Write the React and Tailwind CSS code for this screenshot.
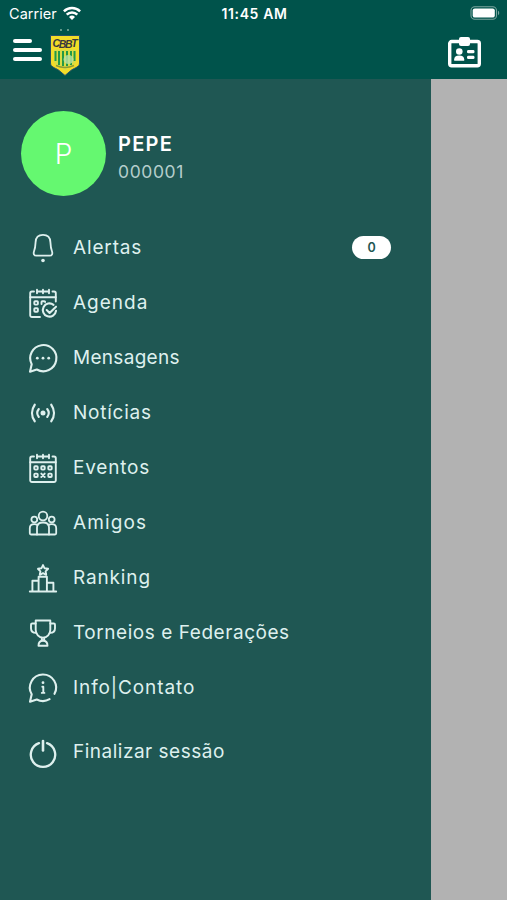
import React from "react";

const menu = [
  { id: "alertas", label: "Alertas", icon: BellIcon, badge: 0, tracking: "tracking-[0.85px]" },
  { id: "agenda", label: "Agenda", icon: AgendaIcon, tracking: "tracking-[1px]" },
  { id: "mensagens", label: "Mensagens", icon: MessageIcon, tracking: "tracking-[0.3px]" },
  { id: "noticias", label: "Notícias", icon: NewsIcon, tracking: "tracking-[0.75px]" },
  { id: "eventos", label: "Eventos", icon: EventsIcon, tracking: "tracking-[0.8px]" },
  { id: "amigos", label: "Amigos", icon: FriendsIcon, tracking: "tracking-[1.1px]" },
  { id: "ranking", label: "Ranking", icon: RankingIcon, tracking: "tracking-[0.85px]" },
  { id: "torneios", label: "Torneios e Federações", icon: TrophyIcon, tracking: "tracking-[0.55px]" },
  { id: "info", label: "Info|Contato", icon: InfoIcon, tracking: "tracking-[0.9px]" },
];

function Icon({ children, width = 1.8 }) {
  return (
    <svg className="w-[30px] h-[31px] shrink-0 overflow-visible" viewBox="0 0 30 31" fill="none" stroke="currentColor" strokeWidth={width} strokeLinecap="round" strokeLinejoin="round">
      {children}
    </svg>
  );
}

function BellIcon() {
  return (
    <Icon>
      <path d="M15 2.9c-4.6 0-7.2 3-7.4 7.2-.2 4-.5 6.4-1.5 8.900-.9 2.500-.4 4.700 2.400 4.700h13c2.800 0 3.300-2.200 2.400-4.700-1-2.500-1.300-4.900-1.500-8.900C22.200 5.900 19.600 2.900 15 2.900z" />
      <circle cx="15" cy="28.500" r="1.800" fill="currentColor" stroke="none" />
    </Icon>
  );
}

function CalendarTop() {
  return <path d="M6 4.500H4a1.800 1.800 0 0 0-1.800 1.800v3.900h25.600V6.300A1.800 1.800 0 0 0 26 4.500h-1.500M9 2.700v3.600M15 2.700v3.600M21 2.700v3.600M9 4.500h12" />;
}

function AgendaIcon() {
  return (
    <Icon width={1.9}>
      <CalendarTop />
      <path d="M2.200 10.200v18a1.800 1.800 0 0 0 1.800 1.800h8M27.800 10.200v4.300" />
      <rect x="6.300" y="14.200" width="3.600" height="3.400" rx="0.800" />
      <rect x="6.300" y="21.300" width="3.600" height="3.400" rx="0.800" />
      <path d="M13.500 17v-2a.8.8 0 0 1 .8-.8h2a.8.8 0 0 1 .8.8" />
      <path d="M25.500 17.800a6.600 6.600 0 1 0 2.500 6M18.700 23l2.900 2.900 6.400-6.200" strokeWidth="2.100" />
    </Icon>
  );
}

function EventsIcon() {
  return (
    <Icon width={1.9}>
      <CalendarTop />
      <path d="M2.200 10.200v18A1.800 1.800 0 0 0 4 30h22a1.800 1.800 0 0 0 1.800-1.800v-18" />
      <rect x="6.300" y="14.200" width="3.400" height="3.400" rx="0.800" />
      <rect x="13.300" y="14.200" width="3.400" height="3.400" rx="0.800" />
      <rect x="20.300" y="14.200" width="3.400" height="3.400" rx="0.800" />
      <rect x="6.300" y="21.600" width="3.400" height="3.400" rx="0.800" />
      <path d="M13.300 21.600l3.400 3.400M16.700 21.600L13.300 25" />
      <rect x="20.300" y="21.600" width="3.400" height="3.400" rx="0.800" />
    </Icon>
  );
}

function MessageIcon() {
  return (
    <Icon width={2.1}>
      <path d="M2 29.700l1.700-7.500A13.100 13.100 0 1 1 8.800 27.500z" />
      <g fill="currentColor" stroke="none">
        <circle cx="9.300" cy="16.200" r="1.400" />
        <circle cx="15" cy="16.200" r="1.400" />
        <circle cx="20.700" cy="16.200" r="1.400" />
      </g>
    </Icon>
  );
}

function NewsIcon() {
  return (
    <Icon width={2.1}>
      <circle cx="15" cy="16" r="2.500" fill="currentColor" stroke="none" />
      <path d="M10.800 12c-1.900 2.400-1.900 5.600 0 8M19.200 12c1.900 2.400 1.900 5.600 0 8" />
      <path d="M6.700 7.800c-3.500 5-3.500 11.400 0 16.400M23.300 7.800c3.500 5 3.500 11.400 0 16.400" strokeWidth="2.300" />
    </Icon>
  );
}

function FriendsIcon() {
  return (
    <Icon width={1.8}>
      <circle cx="15" cy="9" r="4.300" />
      <circle cx="6.300" cy="12.500" r="2.900" />
      <circle cx="23.700" cy="12.500" r="2.900" />
      <path d="M9 27.500V20.500c0-3 2.200-5 6-5s6 2 6 5v7z" />
      <path d="M9 27.500H3a1.200 1.200 0 0 1-1.200-1.200v-5.100c0-2.700 1.800-4 4.500-4 1.300 0 2.400.3 3.200.9M21 27.500h6a1.200 1.200 0 0 0 1.200-1.200v-5.100c0-2.700-1.800-4-4.500-4-1.300 0-2.400.3-3.200.9" />
    </Icon>
  );
}

function RankingIcon() {
  return (
    <Icon width={1.9}>
      <path d="M1.800 29.500h26.400M4.400 29.500V18.700h6.200M10.600 29.500V14.700h8.300v14.800M18.900 20.700h6.500v8.800" />
      <path d="M15 3.100l1.600 3.200 3.500.5-2.500 2.500.6 3.500L15 11.100l-3.200 1.700.6-3.500-2.500-2.500 3.500-.5z" />
    </Icon>
  );
}

function TrophyIcon() {
  return (
    <Icon width={1.9}>
      <path d="M7.700 3.500h14.600v9.200c0 4.500-3.200 7.900-7.300 7.900s-7.300-3.400-7.300-7.900z" />
      <path d="M7.700 6.500H4.200C3.500 6.500 3 7 3 7.700v3.500c0 2.700 1.900 4.600 5.100 4.600M22.300 6.500h3.500c.7 0 1.200.5 1.200 1.200v3.500c0 2.700-1.900 4.600-5.100 4.600" />
      <path d="M13.800 20.700v2.600M16.200 20.700v2.600M10.500 28.800h9c0-3-1.800-5-4.500-5s-4.500 2-4.500 5z" />
    </Icon>
  );
}

function InfoIcon() {
  return (
    <Icon width={2.1}>
      <path d="M26.500 21.800A13.100 13.100 0 1 0 3.700 22.200L2 29.700l6.800-2.200a13 13 0 0 0 12.800-.3" />
      <path d="M14.300 14.700h1v6.200M13.800 20.900h2.600" strokeWidth="1.900" />
      <circle cx="15" cy="10.700" r="1.400" fill="currentColor" stroke="none" />
    </Icon>
  );
}

function PowerIcon() {
  return (
    <Icon width={2.3}>
      <path d="M11 6.200a12.200 12.200 0 1 0 8 0" />
      <path d="M15 4v9.500" strokeWidth="2.600" />
    </Icon>
  );
}

function StatusBar() {
  return (
    <div className="h-7 flex items-center justify-between pl-[9px] pr-[7px] text-[14.500px] leading-none">
      <div className="flex-1 flex items-center gap-[6px]">
        <span className="tracking-[0.05px]">Carrier</span>
        <svg className="w-[18px] h-[14px] -mt-[2px]" viewBox="0 0 18 14" fill="none" stroke="currentColor" strokeWidth="2.500">
          <path d="M.9 5.300a11.500 11.500 0 0 1 16.200 0M3.700 8.700a7.500 7.500 0 0 1 10.600 0" />
          <path d="M9 13.900L6 10.900a4.300 4.300 0 0 1 6 0z" fill="currentColor" stroke="none" />
        </svg>
      </div>
      <span className="text-[14px] font-semibold tracking-[0.6px]">11:45 AM</span>
      <div className="flex-1 flex justify-end">
        <svg className="w-[30px] h-[14px] -mt-[2px]" viewBox="0 0 30 14">
          <rect x="1" y="0.700" width="25.500" height="12.600" rx="3.800" fill="none" stroke="#7ba59f" strokeWidth="1.100" />
          <rect x="2.700" y="2.400" width="22.100" height="9.200" rx="2.200" fill="#fff" />
          <path d="M28 4.800c1.600.6 1.600 3.800 0 4.400z" fill="#7ba59f" />
        </svg>
      </div>
    </div>
  );
}

function Crest() {
  return (
    <svg className="w-[32px] h-[50px]" viewBox="0 0 32 50">
      <circle cx="12" cy="3" r="0.900" fill="#8fb9a8" />
      <circle cx="19" cy="3" r="0.900" fill="#8fb9a8" />
      <path d="M1.500 8.500h29v27.500c0 4-4 4.500-8 7L16 48.500l-6.500-5.500c-4-2.500-8-3-8-7z" fill="#f3dc28" stroke="#24506a" strokeWidth="1" />
      <path d="M5 22.500h22v12.500c-1 4-7 4.500-11 8.500-4-4-10-4.500-11-8.500z" fill="#d9dc45" />
      <path d="M6.500 24v10M10 24v14M14 24v15M18 24v15M22 24v14M25.500 24v10" stroke="#249946" strokeWidth="2" />
      <ellipse cx="19.500" cy="32.500" rx="5" ry="4.500" fill="#b6dfa0" opacity="0.850" />
      <path d="M7 38.500q9 4 18 0" stroke="#8c9a35" strokeWidth="1.600" fill="none" />
      <text x="3.500 9.700 16 22.300" y="19.500 21.300 21.300 19.500" fill="#38393f" fontFamily="Liberation Sans, sans-serif" fontWeight="700" fontStyle="italic" fontSize="10.500">CBBT</text>
    </svg>
  );
}

function BadgeIcon() {
  return (
    <svg className="w-[33px] h-[31px]" viewBox="0 0 33 31" fill="#fff">
      <rect x="1.700" y="4.500" width="29.600" height="24.300" rx="2" fill="none" stroke="#fff" strokeWidth="3.400" />
      <rect x="11" y="0" width="11" height="9" rx="2" />
      <circle cx="11.300" cy="14.500" r="3.300" />
      <path d="M6.200 23.700v-1.500c0-2.300 1.700-3.700 5-3.700s5 1.400 5 3.700v1.500z" />
      <rect x="19" y="13" width="7.500" height="3.300" rx="1.400" />
      <rect x="19" y="18.800" width="7.500" height="3.300" rx="1.400" />
    </svg>
  );
}

function MenuItem({ item }) {
  const ItemIcon = item.icon;
  return (
    <li className="h-[55px] flex items-center pl-7 pr-10">
      <ItemIcon />
      <span className={`ml-[15px] whitespace-nowrap ${item.tracking}`}>{item.label}</span>
      {item.badge !== undefined && (
        <span className="ml-auto w-[39px] h-[23px] rounded-full bg-white text-[#1f5753] text-[12.500px] font-semibold flex items-center justify-center">
          {item.badge}
        </span>
      )}
    </li>
  );
}

export default function App() {
  return (
    <div className="w-full h-screen flex flex-col overflow-hidden bg-[#b2b2b2] text-white font-['Inter',sans-serif]">
      <header className="h-[79px] shrink-0 bg-[#00534b]">
        <StatusBar />
        <div className="flex items-start justify-between pl-[13px] pr-[26px]">
          <div className="flex items-start">
            <button className="mt-[11px] flex flex-col gap-[5px]" aria-label="Menu">
              <span className="block w-[19px] h-[4px] rounded-full bg-white" />
              <span className="block w-[29px] h-[4px] rounded-full bg-white" />
              <span className="block w-[29px] h-[4px] rounded-full bg-white" />
            </button>
            <div className="ml-[7px] -mt-px">
              <Crest />
            </div>
          </div>
          <div className="mt-[9px]">
            <BadgeIcon />
          </div>
        </div>
      </header>

      <aside className="w-[431px] flex-1 bg-[#1f5753] text-[#def0ee]">
        <div className="flex items-center pl-[21px] pt-8">
          <div className="w-[85px] h-[85px] rounded-full bg-[#65f870] text-white text-[28px] font-light flex items-center justify-center">P</div>
          <div className="ml-[12px] pt-[8px]">
            <div className="text-[20px] leading-7 font-semibold tracking-[1.3px] text-white">PEPE</div>
            <div className="text-[17.500px] leading-7 tracking-[0.6px] text-[#b5cecc]">000001</div>
          </div>
        </div>

        <ul className="mt-6 text-[19px] leading-6">
          {menu.map((item) => (
            <MenuItem key={item.id} item={item} />
          ))}
        </ul>
        <div className="mt-[10px] h-[55px] flex items-center pl-7 text-[19px]">
          <PowerIcon />
          <span className="ml-[15px] tracking-[0.5px]">Finalizar sessão</span>
        </div>
      </aside>
    </div>
  );
}
